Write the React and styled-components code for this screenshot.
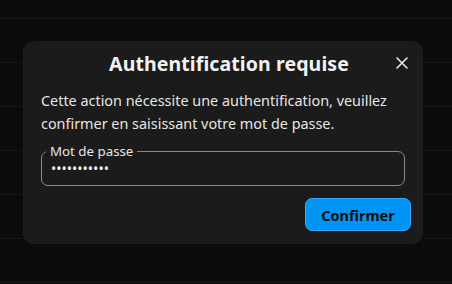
import React from "react";
import styled, { createGlobalStyle } from "styled-components";

const Global = createGlobalStyle`
  html, body { margin: 0; padding: 0; background: #0b0b0b; }
  body { font-family: "Noto Sans", "DejaVu Sans", sans-serif; }
  * { box-sizing: border-box; }
`;

const Page = styled.div`
  width: 452px;
  height: 284px;
  background-color: #0b0b0b;
  background-image: repeating-linear-gradient(
    to bottom,
    transparent 0px,
    transparent 18px,
    #151515 18px,
    #151515 19px,
    transparent 19px,
    transparent 44px
  );
  display: flex;
  align-items: flex-start;
  justify-content: flex-start;
  padding: 41px 0 0 23px;
  overflow: hidden;
`;

const Dialog = styled.div`
  width: 400px;
  height: 203px;
  background: #1b1b1b;
  border-radius: 11px;
  display: flex;
  flex-direction: column;
  padding: 8px 12px 13px 18px;
`;

const Header = styled.div`
  display: flex;
  align-items: center;
  height: 28px;
`;

const Title = styled.h2`
  flex: 1;
  margin: 0;
  padding-left: 27px;
  text-align: center;
  color: #f2f2f2;
  font-size: 19.5px;
  font-weight: 700;
  letter-spacing: 0.1px;
`;

const Close = styled.button`
  width: 24px;
  height: 24px;
  border: none;
  background: none;
  padding: 0;
  display: flex;
  align-items: center;
  justify-content: center;
  color: #e8e8e8;
  margin-right: -3px;
`;

const Body = styled.p`
  margin: 12px 6px 0 0;
  color: #e6e6e6;
  font-size: 14.4px;
  line-height: 23px;
`;

const Field = styled.fieldset`
  margin: 9px 6px 0 0;
  padding: 0 10px 6px 9px;
  border: 1px solid #8a8a8a;
  border-radius: 7px;
  height: 42px;
`;

const Legend = styled.legend`
  padding: 0 4px;
  margin-left: -5px;
  color: #e6e6e6;
  font-size: 13.3px;
  line-height: 14px;
`;

const Input = styled.input`
  display: block;
  width: 100%;
  border: none;
  outline: none;
  background: transparent;
  color: #f0f0f0;
  font-family: inherit;
  font-size: 14px;
  padding: 0;
  margin-top: 1px;
  letter-spacing: 0px;
`;

const Footer = styled.div`
  display: flex;
  justify-content: flex-end;
  margin-top: auto;
`;

const Button = styled.button`
  width: 106px;
  height: 33px;
  border-radius: 7px;
  border: 1px solid #33a8ff;
  background: #0294f4;
  color: #0d0d0d;
  font-family: inherit;
  font-size: 14.5px;
  font-weight: 700;
`;

export default function App() {
  return (
    <>
      <Global />
      <Page>
        <Dialog>
          <Header>
            <Title>Authentification requise</Title>
            <Close aria-label="Fermer">
              <svg width="12" height="12" viewBox="0 0 12 12">
                <path d="M1 1L11 11M11 1L1 11" stroke="currentColor" strokeWidth="1.6" strokeLinecap="round" />
              </svg>
            </Close>
          </Header>
          <Body>
            Cette action nécessite une authentification, veuillez confirmer en saisissant votre mot de passe.
          </Body>
          <Field>
            <Legend>Mot de passe</Legend>
            <Input type="password" defaultValue="motdepasse1" readOnly />
          </Field>
          <Footer>
            <Button>Confirmer</Button>
          </Footer>
        </Dialog>
      </Page>
    </>
  );
}
